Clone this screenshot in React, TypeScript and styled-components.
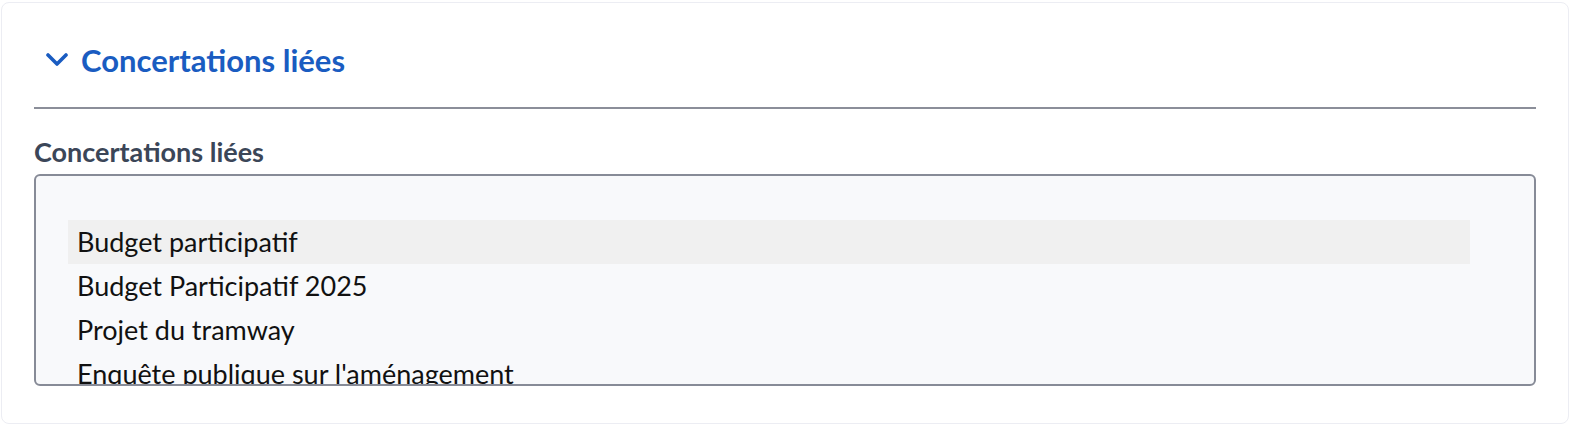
import * as React from 'react';
import styled, { createGlobalStyle } from 'styled-components';

const GlobalStyle = createGlobalStyle`
  *, *::before, *::after {
    box-sizing: border-box;
  }
  body {
    margin: 0;
    background: #ffffff;
    font-family: Lato, 'Noto Sans', sans-serif;
  }
`;

const Card = styled.section`
  margin: 2px 4px 0 1px;
  padding: 0 32px 37px;
  border: 1px solid #ecedf3;
  border-radius: 8px;
  background: #ffffff;
`;

const Header = styled.button`
  display: flex;
  align-items: center;
  gap: 13px;
  width: 100%;
  height: 106px;
  padding: 10px 12px 0;
  border: none;
  border-bottom: 2px solid #8b8e99;
  background: none;
  cursor: pointer;
  font-family: inherit;
`;

const Title = styled.h2`
  margin: 0;
  font-size: 31px;
  line-height: 38px;
  font-weight: 700;
  color: #1a5cc1;
`;

const Label = styled.label`
  display: block;
  margin: 28px 0 7px;
  font-size: 27px;
  line-height: 30px;
  font-weight: 700;
  color: #3b4658;
`;

const ListBox = styled.div`
  height: 212px;
  padding: 44px 64px 0 32px;
  border: 2px solid #878b97;
  border-radius: 6px;
  background: #f8f9fb;
  overflow: hidden;
`;

const Option = styled.div<{ $selected?: boolean }>`
  height: 44px;
  padding-left: 9px;
  font-size: 27px;
  line-height: 44px;
  color: #111111;
  white-space: nowrap;
  background: ${(p) => (p.$selected ? '#f0f0f0' : 'transparent')};
`;

const Chevron = () => (
  <svg width="22" height="14" viewBox="0 0 22 14" aria-hidden="true">
    <polyline
      points="2,2 11,11 20,2"
      fill="none"
      stroke="#1a5cc1"
      strokeWidth="3.6"
      strokeLinecap="round"
      strokeLinejoin="round"
    />
  </svg>
);

const options = [
  'Budget participatif',
  'Budget Participatif 2025',
  'Projet du tramway',
  "Enquête publique sur l'aménagement",
];

export default function App() {
  return (
    <>
      <GlobalStyle />
      <Card>
        <Header type="button">
          <Chevron />
          <Title>Concertations liées</Title>
        </Header>
        <Label>Concertations liées</Label>
        <ListBox role="listbox">
          {options.map((o, i) => (
            <Option key={o} role="option" $selected={i === 0}>
              {o}
            </Option>
          ))}
        </ListBox>
      </Card>
    </>
  );
}
